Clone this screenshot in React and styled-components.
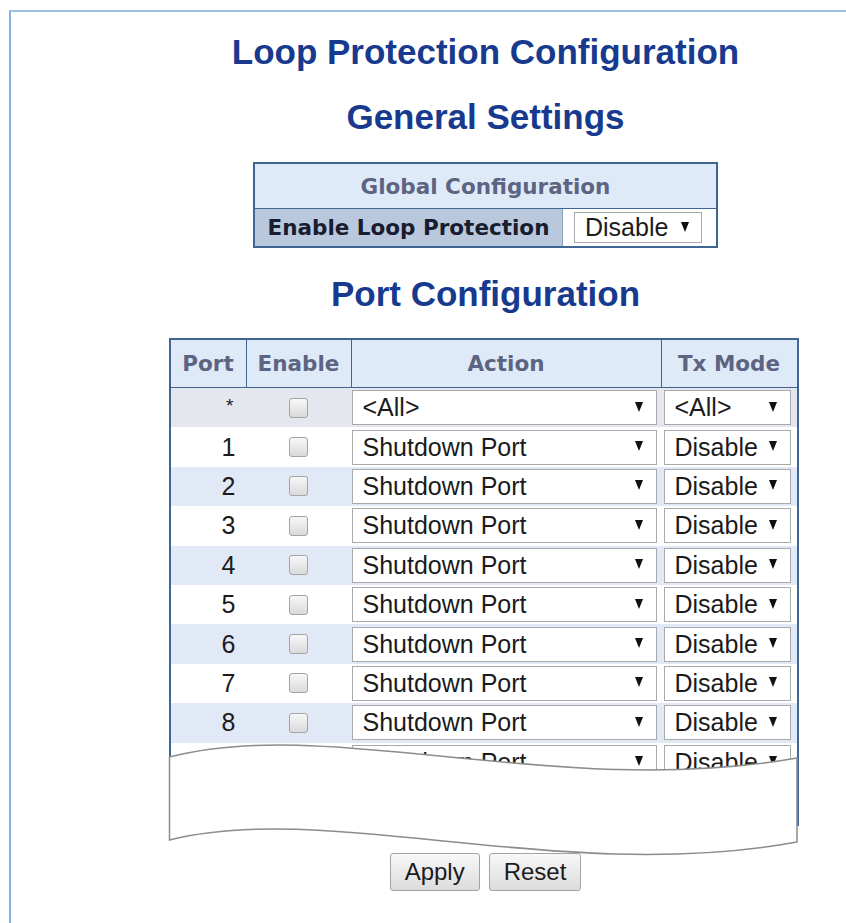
import React from "react";
import styled, { createGlobalStyle } from "styled-components";

const GlobalStyle = createGlobalStyle`
  html, body {
    margin: 0;
    padding: 0;
    background: #ffffff;
    overflow: hidden;
  }
  body {
    font-family: "Liberation Sans", Arial, sans-serif;
  }
`;

const Frame = styled.div`
  margin: 10px 0 0 9px;
  width: 949px;
  min-height: 913px;
  border-top: 2px solid #9ac0e8;
  border-left: 2px solid #88b3e3;
  display: flex;
  flex-direction: column;
  align-items: center;
`;

const Heading = styled.h1`
  margin: ${({ $top }) => $top}px 0 0;
  font: bold 35px/40px "Liberation Sans", Arial, sans-serif;
  color: #173a8e;
`;

const GlobalTable = styled.div`
  margin-top: 25px;
  width: 461px;
  border: 2px solid #3f6593;
  display: grid;
  grid-template-columns: 308px 1fr;
`;

const HeaderCell = styled.div`
  height: ${({ $h }) => $h}px;
  display: flex;
  align-items: center;
  justify-content: center;
  background: #dfeaf8;
  color: #5d6481;
  font: bold 21.5px "DejaVu Sans", Verdana, sans-serif;
  border-bottom: 1px solid #3f6593;
  grid-column: ${({ $span }) => ($span ? "1 / -1" : "auto")};
`;

const LabelCell = styled.div`
  height: 37px;
  display: flex;
  align-items: center;
  justify-content: center;
  background: #b9c8dc;
  color: #171c2e;
  font: bold 21.5px "DejaVu Sans", Verdana, sans-serif;
  border-right: 1px solid #8aa0bb;
`;

const ValueCell = styled.div`
  height: 37px;
  display: flex;
  align-items: center;
  padding-left: 11px;
  background: #ffffff;
`;

const SelectBox = styled.div`
  box-sizing: border-box;
  width: ${({ $w }) => ($w ? `${$w}px` : "100%")};
  height: ${({ $h }) => $h || 35}px;
  border: 1px solid #a9a9a9;
  background: #ffffff;
  display: flex;
  align-items: center;
  justify-content: space-between;
  padding: 0 ${({ $pr }) => $pr || 10}px 0 10px;
  font: 25px "Liberation Sans", Arial, sans-serif;
  color: #1b1b1b;
  white-space: nowrap;
`;

const Arrow = styled.span`
  width: 0;
  height: 0;
  border-left: 4.5px solid transparent;
  border-right: 4.5px solid transparent;
  border-top: 10px solid #111111;
  margin-bottom: 2px;
`;

const PortSection = styled.div`
  position: relative;
  margin: 24px 0 0 -4px;
  width: 630px;
`;

const TableClip = styled.div`
  height: 488px;
  overflow: hidden;
`;

const PortTable = styled.div`
  box-sizing: border-box;
  min-height: 100%;
  border: 2px solid #3f6593;
  border-bottom: none;
`;

const Row = styled.div`
  display: grid;
  grid-template-columns: 75px 105px 310px 136px;
  height: ${({ $head }) => ($head ? "47px" : "39.4px")};
  background: ${({ $bg }) => $bg};
  border-bottom: ${({ $head }) => ($head ? "1px solid #3f6593" : "none")};
`;

const ColHead = styled.div`
  display: flex;
  align-items: center;
  justify-content: center;
  color: #5d6481;
  font: bold 21.5px "DejaVu Sans", Verdana, sans-serif;
  border-left: ${({ $divider }) => ($divider ? "1px solid #3f6593" : "none")};
`;

const PortCell = styled.div`
  display: flex;
  align-items: center;
  justify-content: flex-end;
  padding-right: 10px;
  font: 25px "Liberation Sans", Arial, sans-serif;
  color: #1b1b1b;
`;

const Star = styled.span`
  font-size: 19px;
  margin-right: 2px;
  align-self: flex-start;
  margin-top: 7px;
`;

const CheckCell = styled.div`
  display: flex;
  align-items: center;
  justify-content: center;
`;

const Checkbox = styled.span`
  box-sizing: border-box;
  width: 19px;
  height: 20px;
  border: 1px solid #a4a4a4;
  border-radius: 3px;
  background: linear-gradient(#f7f7f7, #dadada);
`;

const SelectCell = styled.div`
  display: flex;
  align-items: center;
  padding: ${({ $pad }) => $pad};
`;

const Wave = styled.svg`
  position: absolute;
  left: -3px;
  top: 400px;
  width: 636px;
  height: 120px;
`;

const ButtonRow = styled.div`
  margin-top: 27px;
  display: flex;
  gap: 9px;
`;

const Button = styled.button`
  height: 38px;
  padding: 0 14px;
  border: 1px solid #a3a3a3;
  border-radius: 3px;
  background: linear-gradient(#f8f8f8, #dcdcdc);
  font: 24px "Liberation Sans", Arial, sans-serif;
  color: #1b1b1b;
`;

const ports = [1, 2, 3, 4, 5, 6, 7, 8, 9, 10];

const rowBg = (i) => (i % 2 === 0 ? "#e0e9f5" : "#ffffff");

export default function App() {
  return (
    <>
      <GlobalStyle />
      <Frame>
        <Heading $top={20}>Loop Protection Configuration</Heading>
        <Heading $top={25}>General Settings</Heading>

        <GlobalTable>
          <HeaderCell $h={44} $span>
            Global Configuration
          </HeaderCell>
          <LabelCell>Enable Loop Protection</LabelCell>
          <ValueCell>
            <SelectBox $w={128} $h={31} $pr={12}>
              Disable
              <Arrow />
            </SelectBox>
          </ValueCell>
        </GlobalTable>

        <Heading $top={26}>Port Configuration</Heading>

        <PortSection>
          <TableClip>
            <PortTable>
              <Row $head $bg="#dfeaf8">
                <ColHead>Port</ColHead>
                <ColHead $divider>Enable</ColHead>
                <ColHead $divider>Action</ColHead>
                <ColHead $divider>Tx Mode</ColHead>
              </Row>
              <Row $bg="#e4e8ee">
                <PortCell>
                  <Star>*</Star>
                </PortCell>
                <CheckCell>
                  <Checkbox />
                </CheckCell>
                <SelectCell $pad="0 4px 0 1px">
                  <SelectBox $pr={13}>
                    &lt;All&gt;
                    <Arrow />
                  </SelectBox>
                </SelectCell>
                <SelectCell $pad="0 6px 0 3px">
                  <SelectBox $pr={13}>
                    &lt;All&gt;
                    <Arrow />
                  </SelectBox>
                </SelectCell>
              </Row>
              {ports.map((p) => (
                <Row key={p} $bg={rowBg(p)}>
                  <PortCell>{p}</PortCell>
                  <CheckCell>
                    <Checkbox />
                  </CheckCell>
                  <SelectCell $pad="0 4px 0 1px">
                    <SelectBox $pr={13}>
                      Shutdown Port
                      <Arrow />
                    </SelectBox>
                  </SelectCell>
                  <SelectCell $pad="0 6px 0 3px">
                    <SelectBox $pr={13}>
                      Disable
                      <Arrow />
                    </SelectBox>
                  </SelectCell>
                </Row>
              ))}
            </PortTable>
          </TableClip>
          <Wave viewBox="166 738 636 120">
            <path
              d="M169.5,757 C330,715 560,800 797,758 L797,842 C560,885 330,800 169.5,840 Z"
              fill="#ffffff"
              stroke="#8c8c8c"
              strokeWidth="1.5"
            />
          </Wave>
        </PortSection>

        <ButtonRow>
          <Button>Apply</Button>
          <Button>Reset</Button>
        </ButtonRow>
      </Frame>
    </>
  );
}
